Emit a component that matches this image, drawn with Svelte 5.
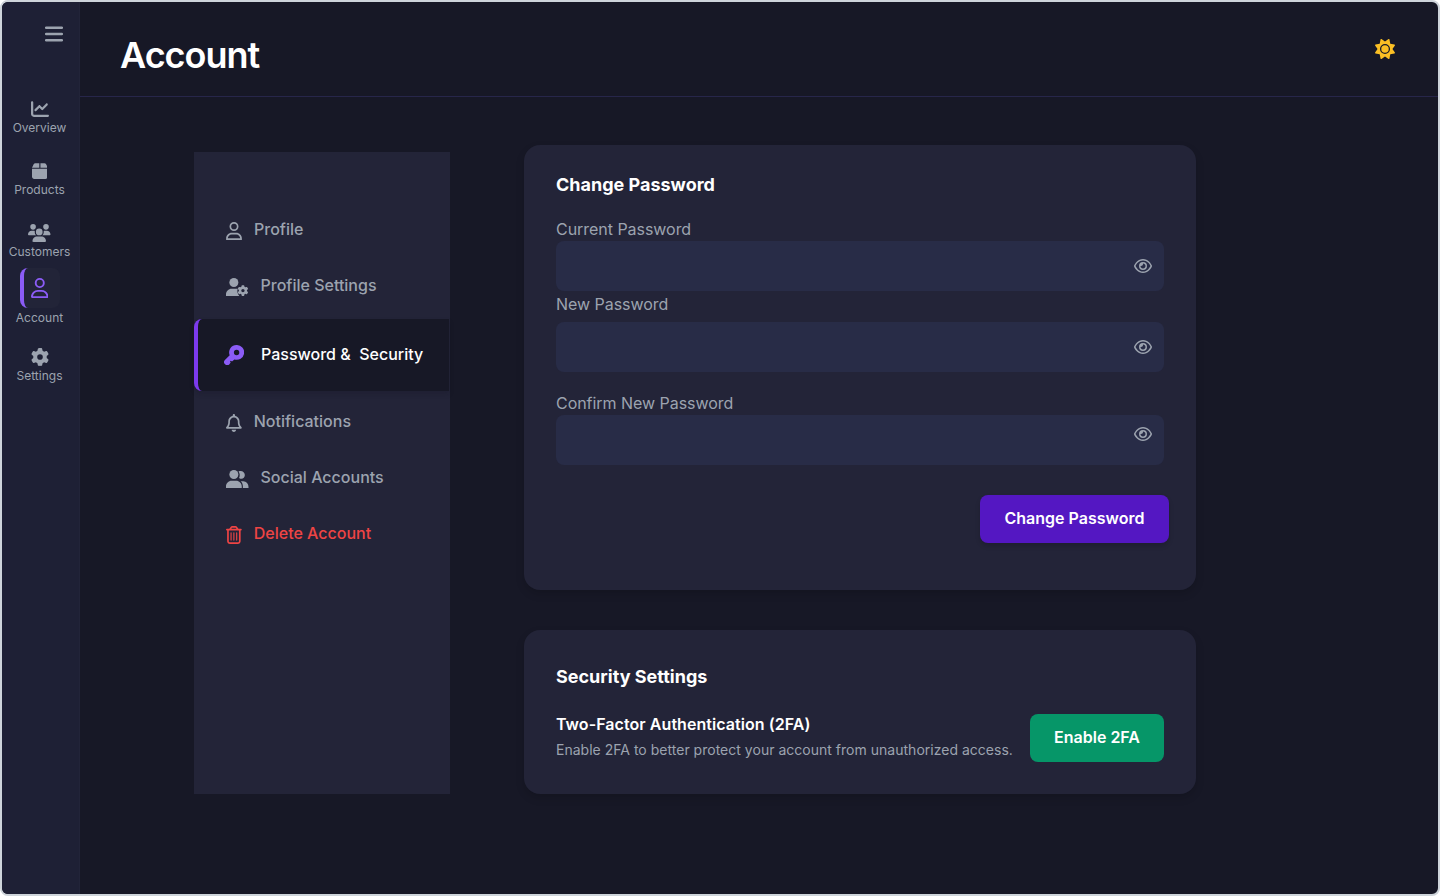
<script>
  const gear = 'M495.9 166.6c3.2 8.7 .5 18.4-6.4 24.6l-43.3 39.4c1.1 8.3 1.7 16.8 1.7 25.4s-.6 17.1-1.7 25.4l43.3 39.4c6.9 6.2 9.6 15.9 6.4 24.6c-4.4 11.9-9.7 23.3-15.8 34.3l-4.7 8.1c-6.6 11-14 21.4-22.1 31.2c-5.9 7.2-15.7 9.6-24.5 6.8l-55.7-17.7c-13.4 10.3-28.2 18.9-44 25.4l-12.5 57.1c-2 9.1-9 16.3-18.2 17.8c-13.8 2.3-28 3.5-42.5 3.5s-28.7-1.2-42.5-3.5c-9.2-1.5-16.2-8.7-18.2-17.8l-12.5-57.1c-15.8-6.5-30.6-15.1-44-25.4L83.1 425.9c-8.8 2.8-18.6 .3-24.5-6.8c-8.1-9.8-15.5-20.2-22.1-31.2l-4.7-8.1c-6.1-11-11.4-22.4-15.8-34.3c-3.2-8.7-.5-18.4 6.4-24.6l43.3-39.4C64.6 273.1 64 264.6 64 256s.6-17.1 1.7-25.4L22.4 191.2c-6.9-6.2-9.6-15.9-6.4-24.6c4.4-11.9 9.7-23.3 15.8-34.3l4.7-8.1c6.6-11 14-21.4 22.1-31.2c5.9-7.2 15.7-9.6 24.5-6.8l55.7 17.7c13.4-10.3 28.2-18.9 44-25.4l12.5-57.1c2-9.1 9-16.3 18.2-17.8C227.3 1.2 241.5 0 256 0s28.7 1.2 42.5 3.5c9.2 1.5 16.2 8.7 18.2 17.8l12.5 57.1c15.8 6.5 30.6 15.1 44 25.4l55.7-17.7c8.8-2.8 18.6-.3 24.5 6.8c8.1 9.8 15.5 20.2 22.1 31.2l4.7 8.1c6.1 11 11.4 22.4 15.8 34.3zM256 336a80 80 0 1 0 0-160 80 80 0 1 0 0 160z';

  const nav = [
    { label: 'Overview', w: 18, h: 18, box: '0 0 512 512', d: 'M64 64c0-17.7-14.3-32-32-32S0 46.3 0 64V400c0 44.2 35.8 80 80 80H480c17.7 0 32-14.3 32-32s-14.3-32-32-32H80c-8.8 0-16-7.2-16-16V64zm406.6 86.6c12.5-12.5 12.5-32.8 0-45.3s-32.8-12.5-45.3 0L320 210.7l-57.4-57.4c-12.5-12.5-32.8-12.5-45.3 0l-112 112c-12.5 12.5-12.5 32.8 0 45.3s32.8 12.5 45.3 0L240 221.3l57.4 57.4c12.5 12.5 32.8 12.5 45.3 0l128-128z' },
    { label: 'Products', w: 15.75, h: 18, box: '0 0 448 512', d: 'M50.7 58.5L0 160H208V32H93.7C75.5 32 58.9 42.3 50.7 58.5zM240 160H448L397.3 58.5C389.1 42.3 372.5 32 354.3 32H240V160zm208 32H0V416c0 35.3 28.7 64 64 64H384c35.3 0 64-28.7 64-64V192z' },
    { label: 'Customers', w: 22.5, h: 18, box: '0 0 640 512', d: 'M144 0a80 80 0 1 1 0 160A80 80 0 1 1 144 0zM512 0a80 80 0 1 1 0 160A80 80 0 1 1 512 0zM0 298.7C0 239.8 47.8 192 106.7 192h42.7c15.9 0 31 3.5 44.6 9.7c-1.3 7.2-1.9 14.7-1.9 22.3c0 38.2 16.8 72.5 43.3 96c-.2 0-.4 0-.7 0H21.3C9.6 320 0 310.4 0 298.7zM405.3 320c-.2 0-.4 0-.7 0c26.6-23.5 43.3-57.8 43.3-96c0-7.6-.7-15-1.9-22.3c13.6-6.3 28.7-9.7 44.6-9.7h42.7C592.2 192 640 239.8 640 298.7c0 11.8-9.6 21.3-21.3 21.3H405.3zM224 224a96 96 0 1 1 192 0 96 96 0 1 1 -192 0zM128 485.3C128 411.7 187.7 352 261.3 352H378.7C452.3 352 512 411.7 512 485.3c0 14.7-11.9 26.7-26.7 26.7H154.7c-14.7 0-26.7-11.9-26.7-26.7z' },
    { label: 'Account', active: true, w: 17.5, h: 20, box: '0 0 448 512', d: 'M304 128a80 80 0 1 0 -160 0 80 80 0 1 0 160 0zM96 128a128 128 0 1 1 256 0A128 128 0 1 1 96 128zM49.3 464H398.7c-8.9-63.3-63.3-112-129-112H178.3c-65.7 0-120.1 48.7-129 112zM0 482.3C0 383.8 79.8 304 178.3 304h91.4C368.2 304 448 383.8 448 482.3c0 16.4-13.3 29.7-29.7 29.7H29.7C13.3 512 0 498.7 0 482.3z' },
    { label: 'Settings', w: 18, h: 18, box: '0 0 512 512', d: gear }
  ];

  const bell = 'M224 0c-17.7 0-32 14.3-32 32V51.2C119 66 64 130.6 64 208v25.4c0 45.4-15.5 89.5-43.8 124.9L5.3 377c-5.8 7.2-6.9 17.1-2.9 25.4S14.8 416 24 416H424c9.2 0 17.6-5.3 21.6-13.6s2.9-18.2-2.9-25.4l-14.9-18.6C399.5 322.9 384 278.8 384 233.4V208c0-77.4-55-142-128-156.8V32c0-17.7-14.3-32-32-32zm0 96c61.9 0 112 50.1 112 112v25.4c0 47.9 13.9 94.6 39.7 134.6H72.3C98.1 328 112 281.3 112 233.4V208c0-61.9 50.1-112 112-112zm64 352H224 160c0 17 6.7 33.3 18.7 45.3s28.3 18.7 45.3 18.7s33.3-6.7 45.3-18.7s18.7-28.3 18.7-45.3z';
  const trash = 'M170.5 51.6L151.5 80h145l-19-28.4c-1.5-2.2-4-3.6-6.7-3.6H177.1c-2.7 0-5.2 1.3-6.7 3.6zm147-26.6L354.2 80H368h48 8c13.3 0 24 10.7 24 24s-10.7 24-24 24h-8V432c0 44.2-35.8 80-80 80H112c-44.2 0-80-35.8-80-80V128H24c-13.3 0-24-10.7-24-24S10.7 80 24 80h8H80 93.8l36.7-55.1C140.9 9.4 158.4 0 177.1 0h93.7c18.7 0 36.2 9.4 46.6 24.9zM80 128V432c0 17.7 14.3 32 32 32H336c17.7 0 32-14.3 32-32V128H80zm80 64V400c0 8.8-7.2 16-16 16s-16-7.2-16-16V192c0-8.8 7.2-16 16-16s16 7.2 16 16zm80 0V400c0 8.8-7.2 16-16 16s-16-7.2-16-16V192c0-8.8 7.2-16 16-16s16 7.2 16 16zm80 0V400c0 8.8-7.2 16-16 16s-16-7.2-16-16V192c0-8.8 7.2-16 16-16s16 7.2 16 16z';
  const eye = 'M288 80c-65.2 0-118.8 29.6-159.9 67.7C89.6 183.5 63 226 49.4 256c13.6 30 40.2 72.5 78.6 108.3C169.2 402.4 222.8 432 288 432s118.8-29.6 159.9-67.7C486.4 328.5 513 286 526.6 256c-13.6-30-40.2-72.5-78.6-108.3C406.8 109.6 353.2 80 288 80zM95.4 112.6C142.5 68.8 207.2 32 288 32s145.5 36.8 192.6 80.6c46.8 43.5 78.1 95.4 93 131.1c3.3 7.9 3.3 16.7 0 24.6c-14.9 35.7-46.2 87.7-93 131.1C433.5 443.2 368.8 480 288 480s-145.5-36.8-192.6-80.6C48.6 356 17.3 304 2.5 268.3c-3.3-7.9-3.3-16.7 0-24.6C17.3 208 48.6 156 95.4 112.6zM288 336c44.2 0 80-35.8 80-80s-35.8-80-80-80c-.7 0-1.3 0-2 0c1.3 5.1 2 10.5 2 16c0 35.3-28.7 64-64 64c-5.5 0-10.9-.7-16-2c0 .7 0 1.3 0 2c0 44.2 35.8 80 80 80zm0-208a128 128 0 1 1 0 256 128 128 0 1 1 0-256z';
  const sun = 'M361.5 1.2c5 2.1 8.6 6.6 9.6 11.9L391 121l107.9 19.8c5.3 1 9.8 4.6 11.9 9.6s1.5 10.7-1.6 15.2L446.9 256l62.3 90.3c3.1 4.5 3.7 10.2 1.6 15.2s-6.6 8.6-11.9 9.6L391 391 371.1 498.9c-1 5.3-4.6 9.8-9.6 11.9s-10.7 1.5-15.2-1.6L256 446.9l-90.3 62.3c-4.5 3.1-10.2 3.7-15.2 1.6s-8.6-6.6-9.6-11.9L121 391 13.1 371.1c-5.3-1-9.8-4.6-11.9-9.6s-1.5-10.7 1.6-15.2L65.1 256 2.8 165.7c-3.1-4.5-3.7-10.2-1.6-15.2s6.6-8.6 11.9-9.6L121 121 140.9 13.1c1-5.3 4.6-9.8 9.6-11.9s10.7-1.5 15.2 1.6L256 65.1 346.3 2.8c4.5-3.1 10.2-3.7 15.2-1.6zM160 256a96 96 0 1 1 192 0 96 96 0 1 1 -192 0zm224 0a128 128 0 1 0 -256 0 128 128 0 1 0 256 0z';

  const fields = [
    { label: 'Current Password', kind: 'old' },
    { label: 'New Password', kind: 'new' },
    { label: 'Confirm New Password', kind: 'confirm' }
  ];
</script>

<div class="frame">
  <aside>
    <svg class="burger" width="18" height="18" viewBox="0 0 18 18"><path d="M1.1 2.75h15.8M1.1 9h15.8M1.1 15.25h15.8" stroke="currentColor" stroke-width="2.3" stroke-linecap="round" /></svg>
    <nav>
      {#each nav as item}
        <div class="nav-item {item.label.toLowerCase()}">
          <span class:tile={item.active} class="nav-icon">
            <svg width={item.w} height={item.h} viewBox={item.box}><path fill="currentColor" d={item.d} /></svg>
          </span>
          <span>{item.label}</span>
        </div>
      {/each}
    </nav>
  </aside>

  <div class="page">
    <header>
      <h1>Account</h1>
      <svg class="sun" width="20" height="20" viewBox="0 0 512 512"><path fill="currentColor" fill-rule="evenodd" d={sun} /></svg>
    </header>

    <main>
      <div class="menu">
        <div class="row">
          <svg width="16" height="18" viewBox="0 0 448 512"><path fill="currentColor" fill-rule="evenodd" d="M96 128a128 128 0 1 1 256 0 128 128 0 1 1-256 0zm48 0a80 80 0 1 0 160 0 80 80 0 1 0-160 0zM0 512v-48c0-88 72-160 160-160h128c88 0 160 72 160 160v48zM48 464h352c0-62-50-112-112-112H160C98 352 48 402 48 464z" /></svg>
          <span>Profile</span>
        </div>
        <div class="row">
          <svg width="22.5" height="18" viewBox="0 0 640 512">
            <circle cx="224" cy="128" r="128" fill="currentColor" />
            <path fill="currentColor" d="M0 512v-48c0-88 72-160 160-160h128q30 0 46 5c-26 70-8 146 44 203z" />
            <g transform="translate(328 204) scale(.6)"><path fill="currentColor" d={gear} /></g>
          </svg>
          <span>Profile Settings</span>
        </div>
        <div class="row current">
          <svg width="20" height="20" viewBox="0 0 20 20"><path fill="currentColor" fill-rule="evenodd" d="M12.6 0a7.4 7.4 0 1 1-2.2 14.4L8 16.5l-1.2-.8-.8.9.7 1-1.3 1.6A3 3 0 1 1 .9 15l4.8-4.7A7.4 7.4 0 0 1 12.6 0zm0 4.8a2.7 2.7 0 1 0 0 5.4 2.7 2.7 0 0 0 0-5.4z" /></svg>
          <span>Password &amp;&nbsp; Security</span>
        </div>
        <div class="row">
          <svg width="15.75" height="18" viewBox="0 0 448 512"><path fill="currentColor" d={bell} /></svg>
          <span>Notifications</span>
        </div>
        <div class="row">
          <svg width="22.5" height="18" viewBox="0 0 640 512">
            <circle cx="224" cy="128" r="128" fill="currentColor" />
            <path fill="currentColor" d="M0 512v-48c0-88 72-160 160-160h128c88 0 160 72 160 160v48zM480 512h160v-32c0-88-64-156-150-160h-70c38 38 60 88 60 144zM372 226c32-64 22-134-16-184 92-42 180 20 180 102 0 98-94 138-164 82z" />
          </svg>
          <span>Social Accounts</span>
        </div>
        <div class="row danger">
          <svg width="15.75" height="18" viewBox="0 0 448 512"><path fill="currentColor" d={trash} /></svg>
          <span>Delete Account</span>
        </div>
      </div>

      <div class="cards">
        <section class="card password">
          <h2>Change Password</h2>
          {#each fields as field}
            <div class="field {field.kind}">
              <span class="label">{field.label}</span>
              <div class="input">
                <svg width="18" height="16" viewBox="0 0 576 512"><path fill="currentColor" d={eye} /></svg>
              </div>
            </div>
          {/each}
          <button class="submit">Change Password</button>
        </section>

        <section class="card security">
          <h2>Security Settings</h2>
          <div class="twofa">
            <div>
              <h3>Two-Factor Authentication (2FA)</h3>
              <p>Enable 2FA to better protect your account from unauthorized access.</p>
            </div>
            <button class="enable">Enable 2FA</button>
          </div>
        </section>
      </div>
    </main>
  </div>
</div>

<style>
  :global(body) { margin: 0; background: #fff; }
  .frame, .frame * { box-sizing: border-box; }
  .frame {
    display: flex;
    width: 1440px;
    height: 896px;
    border: 2px solid #ced4da;
    border-radius: 8px;
    overflow: hidden;
    background: #171826;
    color: #9ca3af;
    font-family: Inter, sans-serif;
  }
  svg { display: block; flex: none; }
  h1, h2, h3, p { margin: 0; }
  button { border: 0; padding: 0 0 2px; font: 600 16px/24px Inter, sans-serif; color: #fff; border-radius: 8px; }

  aside { flex: none; width: 78px; background: #1e2035; border-right: 1px solid #222439; }
  .burger { margin: 23px 0 0 42.5px; }
  nav { display: flex; flex-direction: column; margin-top: 56px; width: 75px; }
  .nav-item { display: flex; flex-direction: column; align-items: center; height: 62px; font-size: 12px; line-height: 16px; }
  .nav-icon { display: flex; align-items: center; justify-content: center; height: 20px; margin-bottom: 1px; }
  .customers { height: 45px; }
  .account { height: 79px; }
  .tile { width: 40px; height: 40px; margin-bottom: 2px; padding-right: 4px; color: #8b5cf6; background: #222438; border-left: 4px solid #8b5cf6; border-radius: 8px; }

  .page { flex: 1; min-width: 0; }
  header { display: flex; justify-content: space-between; height: 95px; padding: 31px 43px 0 40px; border-bottom: 1px solid #27264a; }
  h1 { font-size: 36px; line-height: 44px; font-weight: 600; color: #fff; letter-spacing: -1px; }
  .sun { margin-top: 6px; color: #fbbf24; }

  main { display: flex; align-items: flex-start; padding: 48px 0 0 114px; }
  .menu { width: 256px; height: 642px; margin-top: 7px; padding-top: 50px; background: #232438; }
  .row { display: flex; align-items: center; gap: 12px; height: 56px; padding: 2px 0 0 32px; font-size: 16px; line-height: 24px; font-weight: 500; }
  .row span { position: relative; top: -2px; }
  .current { width: 255px; height: 72px; margin: 5px 0 3px; padding: 0 0 0 26px; gap: 17px; background: #171826; border-left: 4px solid #7c3aed; border-radius: 8px 0 0 8px; box-shadow: 0 3px 5px rgba(15, 16, 28, .2); color: #8b5cf6; }
  .current span { color: #fff; top: -1px; }
  .danger { color: #ef4444; }

  .cards { display: flex; flex-direction: column; gap: 40px; margin-left: 74px; }
  .card { width: 672px; padding: 0 32px; background: #232438; border-radius: 16px; box-shadow: 0 4px 8px rgba(0, 0, 0, .15); }
  .password { height: 445px; padding-top: 26px; }
  h2 { font-size: 18px; line-height: 28px; font-weight: 700; color: #fff; }
  .field { display: flex; flex-direction: column; }
  .label { font-size: 16px; line-height: 24px; letter-spacing: -.04px; }
  .input { display: flex; align-items: center; justify-content: flex-end; height: 50px; padding-right: 12px; background: #282c47; border-radius: 8px; }
  .old { margin-top: 18px; }
  .new { margin-top: 1px; }
  .new .input { margin-top: 6px; }
  .confirm { margin-top: 19px; }
  .confirm .input { padding-bottom: 12px; }
  .submit { display: block; width: 189px; height: 48px; margin: 30px -5px 0 auto; background: #5417c2; box-shadow: 0 3px 5px rgba(0, 0, 0, .16); }
  .security { height: 164px; padding-top: 33px; }
  .twofa { display: flex; justify-content: space-between; align-items: flex-start; margin-top: 23px; }
  h3 { font-size: 16px; line-height: 24px; font-weight: 600; color: #fff; margin-top: -2px; letter-spacing: .06px; }
  p { margin-top: 4px; font-size: 14px; line-height: 20px; white-space: nowrap; letter-spacing: .015px; }
  .enable { width: 134px; height: 48px; background: #069668; }
</style>
